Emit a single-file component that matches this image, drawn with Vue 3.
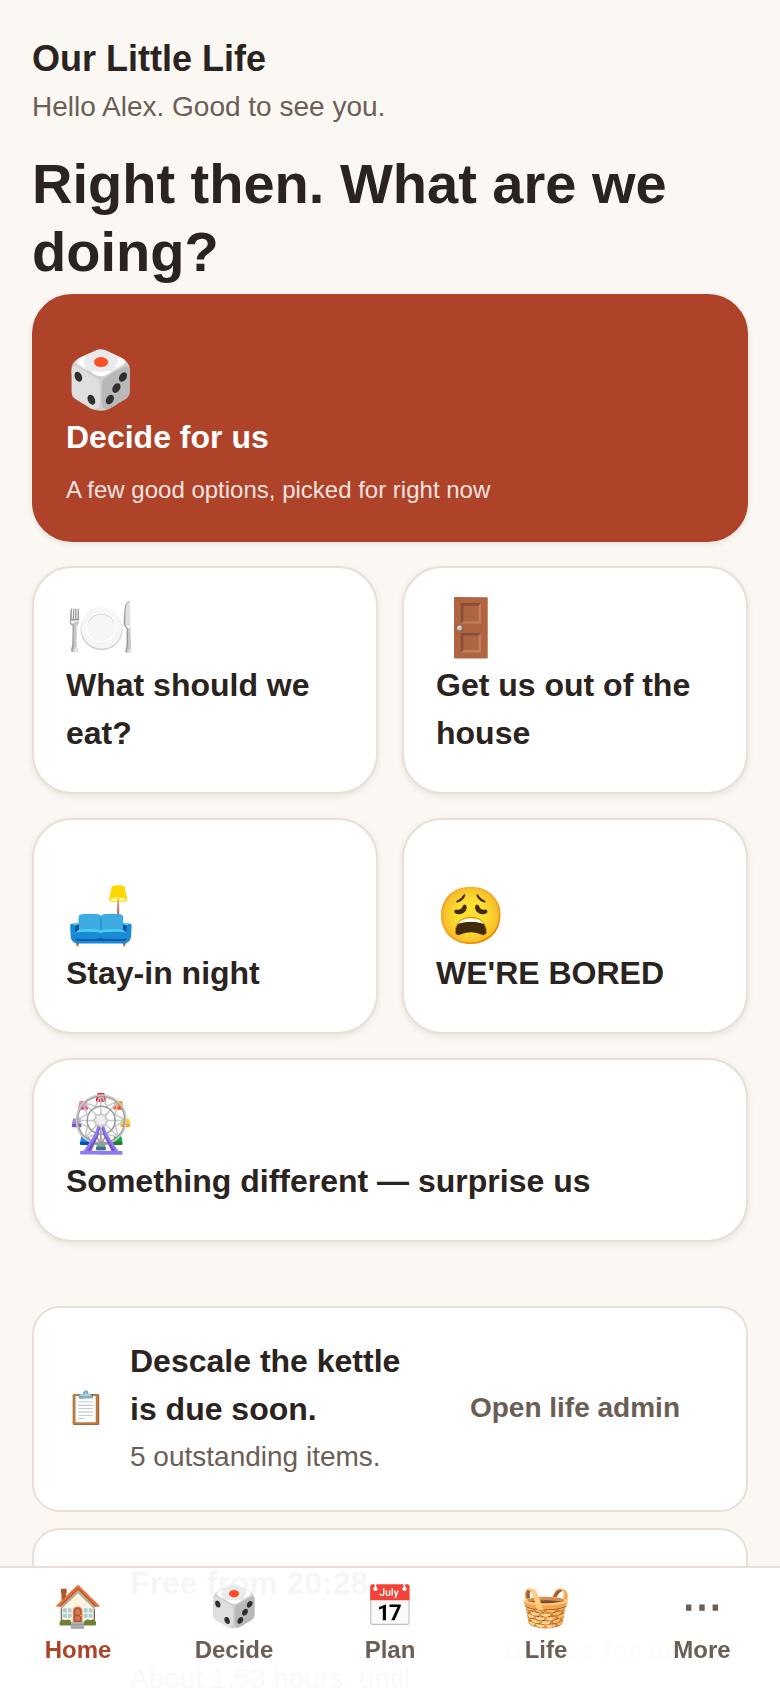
<template>
  <div class="app">
    <main class="page">
      <header class="header">
        <p class="brand">Our Little Life</p>
        <p class="greeting">Hello Alex. Good to see you.</p>
      </header>

      <h1 class="headline">Right then. What are we doing?</h1>

      <section class="tiles">
        <button
          v-for="tile in tiles"
          :key="tile.label"
          type="button"
          class="tile"
          :class="tile.variant"
        >
          <span class="tile-icon" aria-hidden="true">{{ tile.icon }}</span>
          <span class="tile-label">{{ tile.label }}</span>
          <span v-if="tile.hint" class="tile-hint">{{ tile.hint }}</span>
        </button>
      </section>

      <section class="notices">
        <article v-for="notice in notices" :key="notice.title" class="notice">
          <span class="notice-icon" aria-hidden="true">{{ notice.icon }}</span>
          <div class="notice-body">
            <p class="notice-title">{{ notice.title }}</p>
            <p class="notice-text">{{ notice.text }}</p>
          </div>
          <button type="button" class="notice-action" :class="{ soft: notice.soft }">
            {{ notice.action }}
          </button>
        </article>
      </section>
    </main>

    <nav class="tabbar" aria-label="Main">
      <a
        v-for="tab in tabs"
        :key="tab.label"
        href="#"
        class="tab"
        :class="{ active: tab.label === activeTab }"
        @click.prevent="activeTab = tab.label"
      >
        <span class="tab-icon" aria-hidden="true">{{ tab.icon }}</span>
        <span>{{ tab.label }}</span>
      </a>
    </nav>
  </div>
</template>

<script setup>
import { ref } from 'vue'

const activeTab = ref('Home')

const tiles = [
  {
    icon: '🎲',
    label: 'Decide for us',
    hint: 'A few good options, picked for right now',
    variant: 'primary'
  },
  { icon: '🍽️', label: 'What should we eat?' },
  { icon: '🚪', label: 'Get us out of the house' },
  { icon: '🛋️', label: 'Stay-in night' },
  { icon: '😩', label: "WE'RE BORED" },
  { icon: '🎡', label: 'Something different — surprise us', variant: 'wide' }
]

const notices = [
  {
    icon: '📋',
    title: 'Descale the kettle is due soon.',
    text: '5 outstanding items.',
    action: 'Open life admin'
  },
  {
    icon: '',
    title: 'Free from 20:28',
    text: 'About 1.53 hours, until 22:00.',
    action: 'Decide for us',
    soft: true
  }
]

const tabs = [
  { icon: '🏠', label: 'Home' },
  { icon: '🎲', label: 'Decide' },
  { icon: '📅', label: 'Plan' },
  { icon: '🧺', label: 'Life' },
  { icon: '⋯', label: 'More' }
]
</script>

<style>
body {
  background: #fbf8f3;
}
</style>

<style scoped>
.app {
  height: 100vh;
  overflow: hidden;
  background: #fbf8f3;
  color: #2a2320;
  font-family: 'Liberation Sans', Arial, sans-serif;
  font-size: 32px;
  line-height: 48px;
}

p,
h1 {
  margin: 0;
}

button {
  font: inherit;
  color: inherit;
  cursor: pointer;
}

.page {
  padding: 32px 32px 160px;
}

.brand {
  font-size: 36px;
  line-height: 54px;
  font-weight: 700;
}

.greeting {
  font-size: 28px;
  line-height: 42px;
  color: #6b5e55;
}

.headline {
  margin-top: 22px;
  font-size: 56px;
  line-height: 68px;
  font-weight: 700;
}

.tiles {
  display: grid;
  grid-template-columns: 1fr 1fr;
  gap: 24px;
  margin-top: 8px;
}

.tile {
  display: flex;
  flex-direction: column;
  align-items: flex-start;
  justify-content: flex-end;
  gap: 5px;
  min-height: 216px;
  padding: 32px;
  border: 2px solid #e8dfd6;
  border-radius: 40px;
  background: #fff;
  box-shadow: 0 2px 6px rgba(42, 35, 32, 0.1);
  text-align: left;
}

.tile-icon {
  font-size: 56px;
  line-height: 56px;
}

.tile-label {
  margin-bottom: 3px;
  font-weight: 700;
}

.tile-hint {
  margin-top: 3px;
  font-size: 24px;
  line-height: 36px;
  opacity: 0.85;
}

.tile.primary {
  grid-column: 1 / -1;
  min-height: 248px;
  border-color: #ae432a;
  background: #ae432a;
  color: #fff;
}

.tile.wide {
  grid-column: 1 / -1;
  min-height: 184px;
}

.notices {
  display: flex;
  flex-direction: column;
  gap: 16px;
  margin-top: 64px;
}

.notice {
  display: flex;
  align-items: center;
  gap: 24px;
  padding: 29px 32px 32px;
  border: 2px solid #e8dfd6;
  border-radius: 28px;
  background: #fff;
}

.notice-icon {
  width: 40px;
  font-size: 32px;
}

.notice-body {
  flex: 1;
}

.notice-title {
  min-height: 96px;
  margin-bottom: 3px;
  font-weight: 700;
}

.notice-text {
  font-size: 28px;
  line-height: 42px;
  color: #6b5e55;
}

.notice-action {
  padding: 8px 32px;
  border: 2px solid transparent;
  border-radius: 32px;
  background: transparent;
  font-size: 28px;
  font-weight: 700;
  color: #6b5e55;
}

.notice-action.soft {
  background: #f3ece4;
  color: #d9cec4;
}

.tabbar {
  position: fixed;
  right: 0;
  bottom: 0;
  left: 0;
  display: grid;
  grid-template-columns: repeat(5, 1fr);
  border-top: 2px solid #e8dfd6;
  background: rgba(255, 255, 255, 0.96);
}

.tab {
  display: flex;
  flex-direction: column;
  align-items: center;
  gap: 4px;
  padding: 16px 0 20px;
  font-size: 24px;
  line-height: 36px;
  font-weight: 700;
  color: #6b5e55;
  text-decoration: none;
}

.tab.active {
  color: #ae432a;
}

.tab-icon {
  font-size: 40px;
  line-height: 44px;
}
</style>
